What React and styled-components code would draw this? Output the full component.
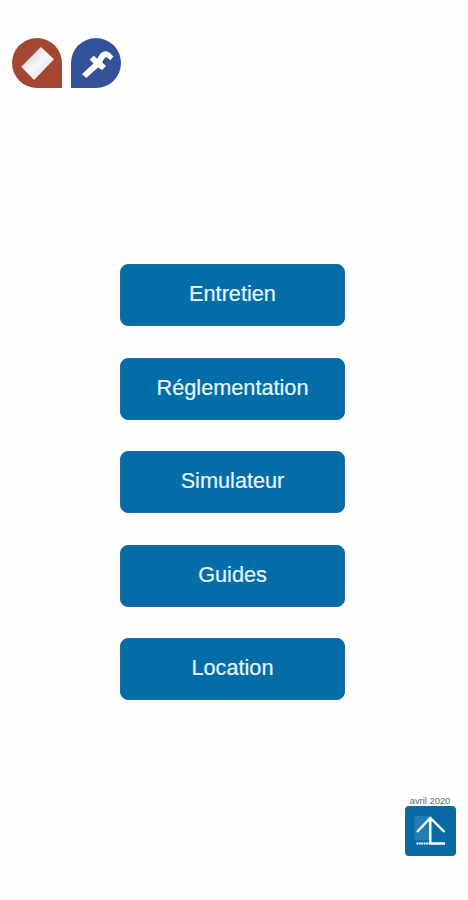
import React from "react";
import styled, { createGlobalStyle } from "styled-components";

const GlobalStyle = createGlobalStyle`
    * {
        box-sizing: border-box;
    }
    body {
        margin: 0;
        background-color: #fefefe;
        font-family: "Liberation Sans", Arial, sans-serif;
    }
`;
const Page = styled.div`
    height: 900px;
    display: flex;
    flex-direction: column;
`;
const Header = styled.header`
    height: 264px;
    padding: 38px 12px 0;
    display: flex;
    align-items: flex-start;
    gap: 9px;
`;
const Badge = styled.a`
    width: 50px;
    height: 50px;
    background-color: ${(props) => props.$color};
    border-radius: ${(props) =>
        props.$corner === "right" ? "50% 50% 0 50%" : "50% 50% 50% 0"};
`;
const Icon = styled.svg`
    display: block;
    width: 100%;
    height: 100%;
`;
const Menu = styled.nav`
    display: flex;
    flex-direction: column;
    gap: 31.5px;
    width: 225px;
    margin-left: 120px;
`;
const MenuButton = styled.button`
    height: 62px;
    padding: 0 0 2px;
    border: 1px solid #2468a0;
    border-radius: 8px;
    background-color: #036da8;
    color: #eaf5fd;
    font-family: inherit;
    font-size: 21.7px;
    line-height: 26px;
    -webkit-text-stroke: 0.2px #eaf5fd;
`;
const Footer = styled.footer`
    width: 52px;
    margin: 95px 12px 0 auto;
    display: flex;
    flex-direction: column;
    align-items: center;
`;
const DateText = styled.div`
    height: 11px;
    font-size: 9.4px;
    line-height: 12px;
    color: #66696c;
    white-space: nowrap;
`;
const TopButton = styled.a`
    width: 51px;
    height: 50px;
    border-radius: 4px;
    background-color: #0869a4;
    overflow: hidden;
`;

const items = [
    "Entretien",
    "Réglementation",
    "Simulateur",
    "Guides",
    "Location",
];

const App = () => {
    return (
        <Page>
            <GlobalStyle />
            <Header>
                <Badge $color='#a34732' $corner='right'>
                    <Icon viewBox='0 0 50 50'>
                        <defs>
                            <linearGradient id='paper' x1='0' y1='0' x2='1' y2='1'>
                                <stop offset='0.2' stopColor='#d6d6d6' />
                                <stop offset='0.5' stopColor='#f7f7f7' />
                                <stop offset='1' stopColor='#dedede' />
                            </linearGradient>
                        </defs>
                        <path
                            d='M28.7 8.7 42 21.3 22 42 9 28.5Z'
                            fill='url(#paper)'
                        />
                        <path
                            d='M28.5 9 9.5 28.3'
                            stroke='#77675f'
                            strokeWidth='0.8'
                        />
                    </Icon>
                </Badge>
                <Badge $color='#34529a' $corner='left'>
                    <Icon viewBox='0 0 50 50' fill='#fff'>
                        <path d='M11 36 22.5 25.5 18.8 21.5 22.5 17.8 26.5 20.8Q28.5 15 33 13.5Q37.5 12.5 42.3 18.5L39.5 22.3 36.3 19.5Q33.5 18.5 31.2 24.5L35 28 31 32 27 29.5 15.2 40Z' />
                    </Icon>
                </Badge>
            </Header>
            <Menu>
                {items.map((item) => (
                    <MenuButton key={item}>{item}</MenuButton>
                ))}
            </Menu>
            <Footer>
                <DateText>avril 2020</DateText>
                <TopButton>
                    <Icon viewBox='0 0 51 50' fill='none' stroke='#fff'>
                        <path d='M9 10H25V34H9Z' fill='#237db2' stroke='none' />
                        <path
                            d='M12 26 25.3 12 39.5 26M25.3 12V37.5H40'
                            strokeWidth='2.4'
                        />
                        <path
                            d='M11.5 37.5H25'
                            strokeWidth='1.8'
                            strokeDasharray='1.8 0.6'
                        />
                    </Icon>
                </TopButton>
            </Footer>
        </Page>
    );
};

export default App;
